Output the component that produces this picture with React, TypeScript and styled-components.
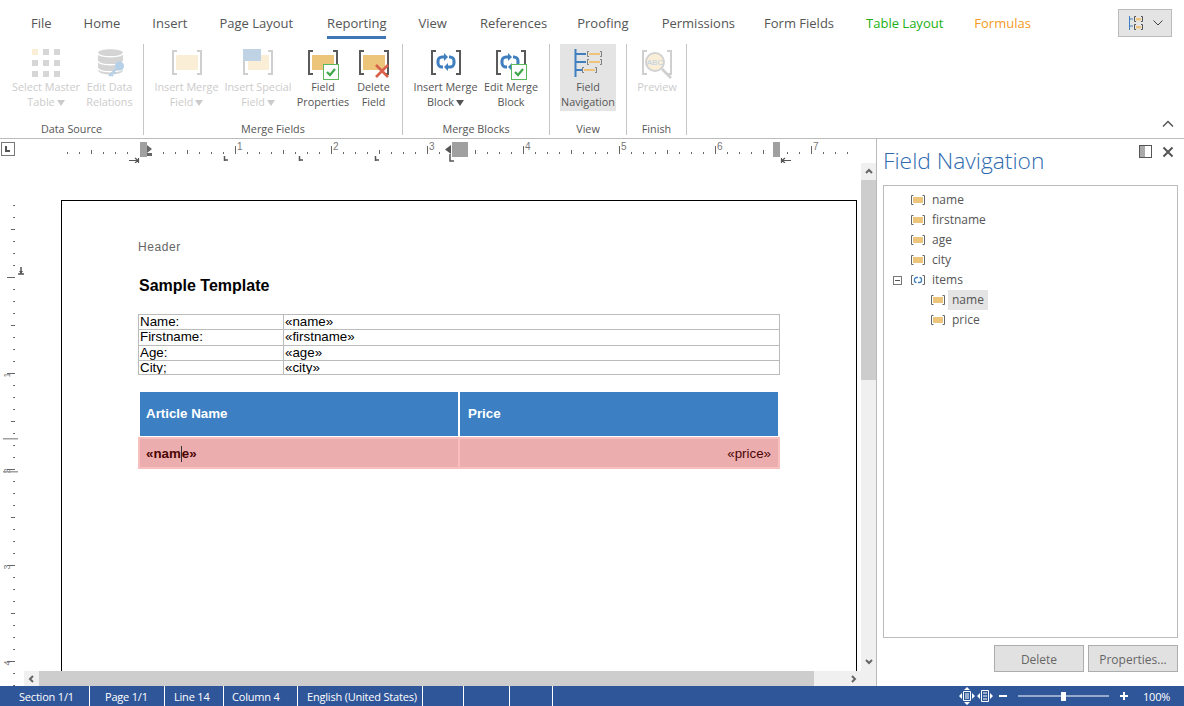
import React from 'react'
import styled, { createGlobalStyle } from 'styled-components'

const UI_FONT = `"Open Sans", "Noto Sans", sans-serif`
const DOC_FONT = `"Liberation Sans", Arial, sans-serif`

const Global = createGlobalStyle`
  html, body { margin: 0; padding: 0; background: #fff; }
  * { box-sizing: border-box; }
`

const Shell = styled.div`
  width: 1184px;
  height: 706px;
  display: flex;
  flex-direction: column;
  overflow: hidden;
  font-family: ${UI_FONT};
  color: #555;
`

/* ---- tabs ---- */
const TabBar = styled.div`
  height: 39px;
  flex: none;
  display: flex;
  padding-left: 31px;
`
const Tab = styled.div<{ $active?: boolean; $color?: string; $gap?: number }>`
  height: 39px;
  margin-right: ${p => p.$gap ?? 32}px;
  padding-top: 14px;
  font-size: 13px;
  line-height: 18px;
  white-space: nowrap;
  color: ${p => p.$color || '#555'};
  border-bottom: 3px solid ${p => (p.$active ? '#3f76b5' : 'transparent')};
`
const LayoutButton = styled.div`
  margin-left: auto;
  margin-right: 12px;
  margin-top: 9px;
  width: 54px;
  height: 28px;
  background: #e4e4e4;
  border: 1px solid #bbb;
  display: flex;
  align-items: center;
  padding-left: 9px;
  gap: 9px;
`

/* ---- ribbon ---- */
const Ribbon = styled.div`
  height: 100px;
  flex: none;
  padding-top: 5px;
  padding-bottom: 3px;
  display: flex;
  border-bottom: 1px solid #bbb;
`
const Group = styled.div<{ $width: number; $pad?: number }>`
  width: ${p => p.$width}px;
  flex: none;
  padding-left: ${p => p.$pad ?? 10}px;
  border-right: 1px solid #c6c6c6;
  display: flex;
  flex-direction: column;
`
const GroupButtons = styled.div<{ $gap?: number }>`
  flex: 1;
  display: flex;
  gap: ${p => p.$gap ?? 5}px;
`
const GroupLabel = styled.div<{ $pad?: number }>`
  height: 14px;
  margin-left: -${p => p.$pad ?? 10}px;
  text-align: center;
  font-size: 10.8px;
  line-height: 16px;
  color: #555;
`
const RibbonButton = styled.div<{ $width: number; $disabled?: boolean; $selected?: boolean; $mr?: number }>`
  width: ${p => p.$width}px;
  height: 67px;
  flex: none;
  margin-right: ${p => p.$mr ?? 0}px;
  padding-top: 4px;
  display: flex;
  flex-direction: column;
  align-items: center;
  background: ${p => (p.$selected ? '#e4e4e4' : 'transparent')};
  color: ${p => (p.$disabled ? '#cbcbcb' : '#555')};
  font-size: 10.8px;
  line-height: 15px;
  text-align: center;
  white-space: nowrap;
  svg { flex: none; margin-bottom: -1px; }
`
const Drop = styled.span`
  display: inline-block;
  width: 0;
  height: 0;
  margin-left: 2px;
  vertical-align: 0;
  border-left: 4px solid transparent;
  border-right: 4px solid transparent;
  border-top: 6px solid currentColor;
`
const Collapse = styled.div`
  margin-left: auto;
  margin-right: 10px;
  margin-bottom: 7px;
  align-self: flex-end;
  display: flex;
`

/* ---- body ---- */
const Body = styled.div`
  flex: 1;
  min-height: 0;
  display: flex;
`
const Editor = styled.div`
  width: 876px;
  flex: none;
  display: flex;
  flex-direction: column;
`
const RulerRow = styled.div`
  height: 24px;
  flex: none;
`
const EditorMain = styled.div`
  flex: 1;
  min-height: 0;
  display: flex;
`
const RulerColumn = styled.div`
  width: 24px;
  flex: none;
`
const DocColumn = styled.div`
  flex: 1;
  min-width: 0;
  display: flex;
  flex-direction: column;
`
const DocRow = styled.div`
  flex: 1;
  min-height: 0;
  display: flex;
`
const DocArea = styled.div`
  flex: 1;
  min-width: 0;
  overflow: hidden;
  padding: 37px 0 0 37px;
`
const Page = styled.div`
  width: 796px;
  height: 900px;
  border: 1px solid #000;
  padding: 38px 0 0 76px;
  font-family: ${DOC_FONT};
  color: #000;
`
const PageHeader = styled.div`
  font-size: 12px;
  line-height: 16px;
  letter-spacing: 0.6px;
  color: #666;
`
const PageTitle = styled.div`
  margin: 21px 0 0 1px;
  font-size: 16px;
  line-height: 20px;
  font-weight: bold;
`
const InfoTable = styled.table`
  margin-top: 18px;
  width: 642px;
  border-collapse: collapse;
  table-layout: fixed;
  font-size: 13.33px;
  line-height: 13px;
  td {
    border: 1px solid #bbb;
    padding: 0 1px;
    vertical-align: top;
    overflow: hidden;
    white-space: nowrap;
  }
  td:first-child { width: 145px; }
`
const InfoRow = styled.tr<{ $height: number }>`
  height: ${p => p.$height}px;
`
const HeadRow = styled.div`
  margin: 17px 0 0 2px;
  display: grid;
  grid-template-columns: 318px 318px;
  gap: 2px;
`
const HeadCell = styled.div<{ $pad?: number }>`
  height: 44px;
  padding-left: ${p => p.$pad ?? 6}px;
  background: #3c80c3;
  color: #fff;
  font-size: 13.33px;
  font-weight: bold;
  line-height: 43px;
`
const MergeRow = styled.div`
  margin-top: 1px;
  width: 642px;
  display: grid;
  grid-template-columns: 322px 320px;
`
const MergeCell = styled.div<{ $right?: boolean }>`
  height: 32px;
  padding: 0 7px 0 6px;
  background: #ebadad;
  border: 2px solid #f9bfbf;
  border-left-width: ${p => (p.$right ? 0 : 2)}px;
  color: #4c0505;
  font-size: 13.33px;
  font-weight: ${p => (p.$right ? 'normal' : 'bold')};
  line-height: 30px;
  text-align: ${p => (p.$right ? 'right' : 'left')};
`
const Caret = styled.span`
  display: inline-block;
  width: 0;
  height: 16px;
  vertical-align: -4px;
  border-left: 1px solid #333;
`

/* ---- scrollbars ---- */
const VBar = styled.div`
  width: 15px;
  flex: none;
  display: flex;
  flex-direction: column;
  background: #f0f0f0;
`
const HBar = styled.div`
  height: 15px;
  flex: none;
  display: flex;
  background: #f0f0f0;
`
const ArrowCell = styled.div`
  width: 15px;
  height: 17px;
  flex: none;
  display: flex;
  align-items: center;
  justify-content: center;
`
const HArrowCell = styled(ArrowCell)`
  height: 15px;
`
const VThumb = styled.div`
  height: 200px;
  background: #cdcdcd;
`
const HThumb = styled.div`
  width: 775px;
  background: #cdcdcd;
`
const Spacer = styled.div`
  flex: 1;
`
const HEnd = styled.div`
  width: 16px;
`
const BottomArrow = styled(ArrowCell)`
  height: 20px;
`

/* ---- side panel ---- */
const Panel = styled.div`
  flex: 1;
  min-width: 0;
  border-left: 1px solid #bbb;
  display: flex;
  flex-direction: column;
`
const PanelHead = styled.div`
  height: 46px;
  flex: none;
  display: flex;
  padding: 0 10px 0 6px;
`
const PanelTitle = styled.div`
  font-size: 22.8px;
  font-weight: 300;
  line-height: 43px;
  color: #2f6bb0;
  white-space: nowrap;
`
const PanelTools = styled.div`
  margin-left: auto;
  padding-top: 6px;
  display: flex;
  gap: 10px;
`
const Tree = styled.div`
  flex: 1;
  min-height: 0;
  margin: 0 6px;
  padding-top: 4px;
  border: 1px solid #bbb;
`
const TreeRow = styled.div`
  height: 20px;
  display: flex;
  align-items: center;
  font-size: 12px;
`
const TreeIndent = styled.div<{ $width: number }>`
  width: ${p => p.$width}px;
  flex: none;
  padding-left: 9px;
  display: flex;
  align-items: center;
`
const TreeLabel = styled.div<{ $selected?: boolean }>`
  margin-left: 3px;
  padding: 0 4px;
  line-height: 20px;
  background: ${p => (p.$selected ? '#e4e4e4' : 'transparent')};
`
const PanelFoot = styled.div`
  height: 48px;
  flex: none;
  padding: 7px 6px 0 0;
  display: flex;
  justify-content: flex-end;
  gap: 4px;
`
const FootButton = styled.div`
  width: 90px;
  height: 27px;
  background: #e1e1e1;
  border: 1px solid #adadad;
  color: #666;
  font-size: 12px;
  line-height: 27px;
  text-align: center;
`

/* ---- status bar ---- */
const StatusBar = styled.div`
  height: 20px;
  flex: none;
  background: #2f5699;
  color: #fff;
  display: flex;
  align-items: center;
  font-size: 11px;
  letter-spacing: -0.2px;
`
const StatusCell = styled.div<{ $width: number; $pad?: number }>`
  width: ${p => p.$width}px;
  height: 20px;
  flex: none;
  padding-left: ${p => p.$pad ?? 0}px;
  border-right: 1px solid #fff;
  line-height: 21px;
  white-space: nowrap;
`
const StatusRight = styled.div`
  margin-left: auto;
  margin-right: 16px;
  display: flex;
  align-items: center;
`
const ZoomText = styled.div`
  margin-left: 14px;
  width: 25px;
  line-height: 21px;
  white-space: nowrap;
`

/* ---- icons ---- */
const GREY = '#5a5a5a'
const FADED = '#cfcfcf'
const AMBER = '#edc57a'
const CREAM = '#faeed6'
const BLUE = '#3f7fc0'

const Brackets = ({ color }: { color: string }) => (
  <g fill="none" stroke={color} strokeWidth="2">
    <path d="M6 3H2V26H6" />
    <path d="M26 3H30V26H26" />
  </g>
)
const CheckBadge = () => (
  <g>
    <rect x="16.5" y="16.5" width="15" height="15" fill="#fff" stroke="#5cb85c" />
    <path d="M20 24l3 3 5-6" fill="none" stroke="#3ea84a" strokeWidth="2.2" />
  </g>
)
const Sync = ({ color = BLUE, width = 3 }: { color?: string; width?: number }) => (
  <g fill="none" stroke={color} strokeWidth={width}>
    <path d="M14 10h-2a4 4 0 0 0-4 4v2a4 4 0 0 0 4 4h1" />
    <path d="M18 20h2a4 4 0 0 0 4-4v-2a4 4 0 0 0-4-4h-1" />
    <path d="M14 6v8l4-4z" fill={color} stroke="none" />
    <path d="M18 16v8l-4-4z" fill={color} stroke="none" />
  </g>
)
const Icon = ({ children }: { children: React.ReactNode }) => (
  <svg width="32" height="32" viewBox="0 0 32 32">{children}</svg>
)

const MasterTableIcon = () => (
  <Icon>
    {[1, 12, 23].map(y => [2, 13, 24].map(x => (
      <rect key={`${x}-${y}`} x={x} y={y} width="6" height="6" fill={x === 2 && y === 1 ? CREAM : '#d6d6d6'} />
    )))}
  </Icon>
)
const RelationsIcon = () => (
  <Icon>
    <path d="M4 5c0-5 25-5 25 0v17c0 6-25 6-25 0z" fill="#d4d4d4" />
    <path d="M4 5c0 5 25 5 25 0M4 13c0 5 25 5 25 0M4 20c0 5 25 5 25 0" fill="none" stroke="#fff" strokeWidth="1.3" />
    <circle cx="25.5" cy="18" r="4.5" fill="#b6d0e8" />
    <path d="M23 20l-8 8M17 26l2 2M19.5 23.5l2 2" stroke="#b6d0e8" strokeWidth="2.2" fill="none" />
  </Icon>
)
const MergeFieldIcon = () => (
  <Icon>
    <Brackets color={FADED} />
    <rect x="5" y="7" width="22" height="15" fill={CREAM} />
  </Icon>
)
const SpecialFieldIcon = () => (
  <Icon>
    <Brackets color={FADED} />
    <rect x="6" y="7" width="21" height="15" fill={CREAM} />
    <rect x="1" y="1" width="18" height="12" fill="#c0d3e5" />
  </Icon>
)
const FieldPropsIcon = () => (
  <Icon>
    <Brackets color={GREY} />
    <rect x="5" y="7" width="22" height="15" fill={AMBER} />
    <CheckBadge />
  </Icon>
)
const DeleteFieldIcon = () => (
  <Icon>
    <Brackets color={GREY} />
    <rect x="5" y="7" width="22" height="15" fill={AMBER} />
    <path d="M18 17l12 12M30 17L18 29" stroke="#d9604a" strokeWidth="2.6" fill="none" />
  </Icon>
)
const MergeBlockIcon = () => (
  <Icon>
    <Brackets color={GREY} />
    <g transform="translate(0 -1)"><Sync /></g>
  </Icon>
)
const EditBlockIcon = () => (
  <Icon>
    <Brackets color={GREY} />
    <g transform="translate(-1 -1)"><Sync /></g>
    <CheckBadge />
  </Icon>
)
const NavItem = ({ x, y }: { x: number; y: number }) => (
  <g>
    <path d={`M${x + 2} ${y}.5h-1.500v5h1.500M${x + 13} ${y}.5h1.500v5h-1.500`} stroke="#666" strokeWidth=".8" fill="none" />
    <rect x={x + 2} y={y + 2} width="11" height="2" fill={AMBER} />
  </g>
)
const NavIcon = () => (
  <Icon>
    <path d="M3.500 1V29M3 6h11M3 14h11M3 22h7" stroke={BLUE} strokeWidth="2" fill="none" />
    <NavItem x={15} y={3} />
    <NavItem x={15} y={11} />
    <NavItem x={10} y={19} />
  </Icon>
)
const PreviewIcon = () => (
  <Icon>
    <Brackets color={FADED} />
    <circle cx="14" cy="14" r="9" fill={CREAM} stroke="#d2d2d2" strokeWidth="2" />
    <text x="14" y="17" fontSize="8" textAnchor="middle" fontFamily={DOC_FONT} fill="#b9d0e6">ABC</text>
    <path d="M21 21l9 9" stroke="#cfcfcf" strokeWidth="2.6" />
  </Icon>
)
const FieldMini = () => (
  <svg width="14" height="12" viewBox="0 0 14 12">
    <path d="M2.500 1.500H.5v9h2M11.500 1.500h2v9h-2" stroke="#666" fill="none" />
    <rect x="2" y="3" width="10" height="6" fill={AMBER} />
  </svg>
)
const BlockMini = () => (
  <svg width="14" height="12" viewBox="0 0 14 12">
    <path d="M2.500 1.500H.5v9h2M11.500 1.500h2v9h-2" stroke="#666" fill="none" />
    <path d="M7 3.500H5.500a2 2 0 0 0-2 2v1a2 2 0 0 0 2 2M7 8.500h1.500a2 2 0 0 0 2-2v-1a2 2 0 0 0-2-2" stroke={BLUE} strokeWidth="1.3" fill="none" />
  </svg>
)
const Expander = () => (
  <svg width="9" height="9" viewBox="0 0 9 9">
    <rect x=".5" y=".5" width="8" height="8" fill="#fff" stroke="#777" />
    <path d="M2 4.500h5" stroke="#555" />
  </svg>
)
const Chevron = ({ dir, color = '#666' }: { dir: 'up' | 'down' | 'left' | 'right'; color?: string }) => {
  const d = {
    up: 'M2 6l3-3 3 3',
    down: 'M2 4l3 3 3-3',
    left: 'M6 2L3 5l3 3',
    right: 'M4 2l3 3-3 3',
  }[dir]
  return (
    <svg width="10" height="10" viewBox="0 0 10 10">
      <path d={d} fill="none" stroke={color} strokeWidth="2" />
    </svg>
  )
}

/* ---- rulers ---- */
const RULER_GREY = '#666'
const hiddenTick = (x: number) => (x >= 137 && x <= 160) || (x >= 445 && x <= 470) || (x >= 772 && x <= 782)

const HorizontalRuler = () => {
  const ticks = Array.from({ length: 66 }, (_, i) => i)
  return (
    <svg width="861" height="24" viewBox="0 0 861 24" style={{ display: 'block' }}>
      <rect x="1.500" y="3.500" width="13" height="13" fill="#fff" stroke="#777" />
      <path d="M6 7v5h4" fill="none" stroke="#555" strokeWidth="2" />
      {ticks.map(i => {
        const x = 67 + i * 12
        if (hiddenTick(x)) return null
        const top = i % 8 === 6 ? 7 : i % 4 === 2 ? 11 : 13
        return <rect key={i} x={x} y={top} width="1" height={15 - top} fill={RULER_GREY} />
      })}
      {[1, 2, 3, 4, 5, 6, 7].map(n => (
        <text key={n} x={141 + n * 96} y={11} fontSize="10" fontFamily={DOC_FONT} fill="#777">{n}</text>
      ))}
      {[224, 299, 375].map(x => (
        <path key={x} d={`M${x + 0.5} 21v5M${x} 25h4`} transform="translate(0 -4)" stroke="#555" strokeWidth="1.500" fill="none" />
      ))}
      <rect x="140" y="3" width="7" height="15" fill="#a0a0a0" />
      <path d="M147 6l5 4-5 4zM147 14l5 0 0 3-5 0z" fill="#666" />
      <path d="M129 21.500h9M138.500 19v5M135 19l3 2.500-3 2.500" stroke="#555" strokeWidth="1.200" fill="none" />
      <rect x="452" y="3" width="16" height="15" fill="#a0a0a0" />
      <path d="M451 6v9l-6-4.500z" fill="#555" />
      <path d="M450 15v7h4" stroke="#555" strokeWidth="1.500" fill="none" />
      <rect x="773" y="3" width="7" height="15" fill="#a0a0a0" />
      <path d="M782 21.500h9M781.500 19v5M785 19l-3 2.500 3 2.500" stroke="#555" strokeWidth="1.200" fill="none" />
    </svg>
  )
}

const VerticalRuler = () => {
  const ticks = Array.from({ length: 41 }, (_, i) => i)
  return (
    <svg width="24" height="523" viewBox="0 0 24 523" style={{ display: 'block' }}>
      {ticks.map(i => {
        const y = 42 + i * 12
        const left = i % 8 === 6 ? 7 : i % 4 === 2 ? 11 : 13
        return <rect key={i} x={left} y={y} width={15 - left} height="1" fill={RULER_GREY} />
      })}
      {[1, 2, 3, 4].map(n => (
        <text key={n} transform={`translate(10 ${116 + n * 96}) rotate(-90)`} fontSize="9" textAnchor="middle" fontFamily={DOC_FONT} fill="#777">{n}</text>
      ))}
      <path d="M21 104v7M18 111h6" stroke="#555" strokeWidth="1.500" fill="none" />
      <path d="M19 108l2 3 2-3z" fill="#555" />
      <rect x="3" y="275" width="15" height="1.500" fill="#a0a0a0" />
      <rect x="3" y="308" width="15" height="1.500" fill="#a0a0a0" />
    </svg>
  )
}

const treeItems = [
  { label: 'name' },
  { label: 'firstname' },
  { label: 'age' },
  { label: 'city' },
]

export default function App() {
  return (
    <Shell>
      <Global />
      <TabBar>
        <Tab>File</Tab>
        <Tab>Home</Tab>
        <Tab>Insert</Tab>
        <Tab $gap={34}>Page Layout</Tab>
        <Tab $active>Reporting</Tab>
        <Tab $gap={33}>View</Tab>
        <Tab $gap={30}>References</Tab>
        <Tab $gap={33}>Proofing</Tab>
        <Tab $gap={29}>Permissions</Tab>
        <Tab>Form Fields</Tab>
        <Tab $color="#22b014" $gap={31}>Table Layout</Tab>
        <Tab $color="#f59a23">Formulas</Tab>
        <LayoutButton>
          <svg width="16" height="16" viewBox="0 0 16 16">
            <path d="M1.500 1v14M1 4h4M1 11h4" stroke={BLUE} fill="none" />
            <path d="M8 1.500H6.500v5H8M13 1.500h1.500v5H13M8 9.500H6.500v5H8M13 9.500h1.500v5H13" stroke="#555" fill="none" />
            <rect x="8" y="3" width="5" height="2.500" fill={AMBER} />
            <rect x="8" y="11" width="5" height="2.500" fill={AMBER} />
          </svg>
          <svg width="10" height="6" viewBox="0 0 10 6">
            <path d="M.5.500L5 5 9.500.500" stroke="#444" fill="none" />
          </svg>
        </LayoutButton>
      </TabBar>

      <Ribbon>
        <Group $width={144} $pad={12}>
          <GroupButtons $gap={6}>
            <RibbonButton $width={68} $disabled><MasterTableIcon />Select Master<span>Table<Drop /></span></RibbonButton>
            <RibbonButton $width={47} $disabled><RelationsIcon />Edit Data<br />Relations</RibbonButton>
          </GroupButtons>
          <GroupLabel $pad={12}>Data Source</GroupLabel>
        </Group>
        <Group $width={259}>
          <GroupButtons>
            <RibbonButton $width={65} $disabled><MergeFieldIcon />Insert Merge<span>Field<Drop /></span></RibbonButton>
            <RibbonButton $width={68} $disabled><SpecialFieldIcon />Insert Special<span>Field<Drop /></span></RibbonButton>
            <RibbonButton $width={52} $mr={3}><FieldPropsIcon />Field<br />Properties</RibbonButton>
            <RibbonButton $width={33}><DeleteFieldIcon />Delete<br />Field</RibbonButton>
          </GroupButtons>
          <GroupLabel>Merge Fields</GroupLabel>
        </Group>
        <Group $width={147}>
          <GroupButtons>
            <RibbonButton $width={65}><MergeBlockIcon />Insert Merge<span>Block<Drop /></span></RibbonButton>
            <RibbonButton $width={56}><EditBlockIcon />Edit Merge<br />Block</RibbonButton>
          </GroupButtons>
          <GroupLabel>Merge Blocks</GroupLabel>
        </Group>
        <Group $width={77}>
          <GroupButtons>
            <RibbonButton $width={56} $selected><NavIcon />Field<br />Navigation</RibbonButton>
          </GroupButtons>
          <GroupLabel>View</GroupLabel>
        </Group>
        <Group $width={60}>
          <GroupButtons>
            <RibbonButton $width={40} $disabled><PreviewIcon />Preview</RibbonButton>
          </GroupButtons>
          <GroupLabel>Finish</GroupLabel>
        </Group>
        <Collapse>
          <svg width="12" height="8" viewBox="0 0 12 8">
            <path d="M1 6.500l5-5 5 5" stroke="#555" strokeWidth="1.500" fill="none" />
          </svg>
        </Collapse>
      </Ribbon>

      <Body>
        <Editor>
          <RulerRow><HorizontalRuler /></RulerRow>
          <EditorMain>
            <RulerColumn><VerticalRuler /></RulerColumn>
            <DocColumn>
              <DocRow>
                <DocArea>
                  <Page>
                    <PageHeader>Header</PageHeader>
                    <PageTitle>Sample Template</PageTitle>
                    <InfoTable>
                      <tbody>
                        <InfoRow $height={15}><td>Name:</td><td>«name»</td></InfoRow>
                        <InfoRow $height={16}><td>Firstname:</td><td>«firstname»</td></InfoRow>
                        <InfoRow $height={15}><td>Age:</td><td>«age»</td></InfoRow>
                        <InfoRow $height={14}><td>City;</td><td>«city»</td></InfoRow>
                      </tbody>
                    </InfoTable>
                    <HeadRow>
                      <HeadCell>Article Name</HeadCell>
                      <HeadCell $pad={8}>Price</HeadCell>
                    </HeadRow>
                    <MergeRow>
                      <MergeCell>«nam<Caret />e»</MergeCell>
                      <MergeCell $right>«price»</MergeCell>
                    </MergeRow>
                  </Page>
                </DocArea>
                <VBar>
                  <ArrowCell><Chevron dir="up" /></ArrowCell>
                  <VThumb />
                  <Spacer />
                  <BottomArrow><Chevron dir="down" /></BottomArrow>
                </VBar>
              </DocRow>
              <HBar>
                <HArrowCell><Chevron dir="left" /></HArrowCell>
                <HThumb />
                <Spacer />
                <HArrowCell><Chevron dir="right" /></HArrowCell>
                <HEnd />
              </HBar>
            </DocColumn>
          </EditorMain>
        </Editor>

        <Panel>
          <PanelHead>
            <PanelTitle>Field Navigation</PanelTitle>
            <PanelTools>
              <svg width="13" height="13" viewBox="0 0 13 13">
                <rect x=".5" y=".5" width="12" height="12" fill="#fff" stroke="#555" />
                <rect x="1" y="1" width="5" height="11" fill="#aaa" />
              </svg>
              <svg width="12" height="13" viewBox="0 0 12 13">
                <path d="M1.500 2.500l9 9M10.500 2.500l-9 9" stroke="#555" strokeWidth="2" />
              </svg>
            </PanelTools>
          </PanelHead>
          <Tree>
            {treeItems.map(item => (
              <TreeRow key={item.label}>
                <TreeIndent $width={27} />
                <FieldMini />
                <TreeLabel>{item.label}</TreeLabel>
              </TreeRow>
            ))}
            <TreeRow>
              <TreeIndent $width={27}><Expander /></TreeIndent>
              <BlockMini />
              <TreeLabel>items</TreeLabel>
            </TreeRow>
            <TreeRow>
              <TreeIndent $width={47} />
              <FieldMini />
              <TreeLabel $selected>name</TreeLabel>
            </TreeRow>
            <TreeRow>
              <TreeIndent $width={47} />
              <FieldMini />
              <TreeLabel>price</TreeLabel>
            </TreeRow>
          </Tree>
          <PanelFoot>
            <FootButton>Delete</FootButton>
            <FootButton>Properties...</FootButton>
          </PanelFoot>
        </Panel>
      </Body>

      <StatusBar>
        <StatusCell $width={90} $pad={19}>Section 1/1</StatusCell>
        <StatusCell $width={75} $pad={15}>Page 1/1</StatusCell>
        <StatusCell $width={59} $pad={9}>Line 14</StatusCell>
        <StatusCell $width={74} $pad={8}>Column 4</StatusCell>
        <StatusCell $width={125} $pad={9}>English (United States)</StatusCell>
        <StatusCell $width={41} />
        <StatusCell $width={46} />
        <StatusCell $width={43} />
        <StatusRight>
          <svg width="170" height="20" viewBox="0 0 170 20">
            <g fill="#fff">
              <path d="M0 10l3-3v6zM16 10l-3-3v6zM8 1l-3 3h6zM8 19l-3-3h6zM18 10l3-3v6zM34 10l-3-3v6z" />
            </g>
            <path d="M4.500 5.500h7v9h-7zM6 8h4M6 10h4M6 12h4M22.500 4.500h7v11h-7zM24 7h4M24 10h4M24 13h4" stroke="#fff" fill="none" />
            <path d="M59 10h91" stroke="#fff" strokeWidth="1" fill="none" />
            <path d="M40 10h8M161 10h8M165 6v8" stroke="#fff" strokeWidth="2" fill="none" />
            <rect x="102" y="6" width="5" height="9" fill="#fff" />
          </svg>
          <ZoomText>100%</ZoomText>
        </StatusRight>
      </StatusBar>
    </Shell>
  )
}
